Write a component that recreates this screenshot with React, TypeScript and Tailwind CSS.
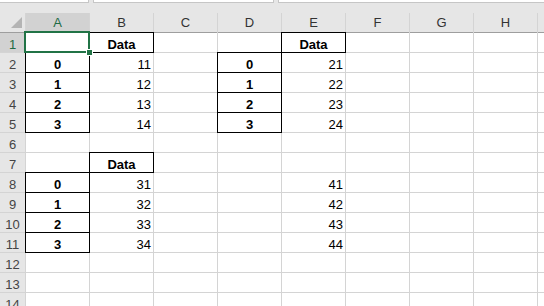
import clsx from 'clsx';

type Cell = { v: string; bold?: boolean; center?: boolean; box?: boolean };

const COLS = ['A', 'B', 'C', 'D', 'E', 'F', 'G', 'H'];
const ROWS = Array.from({ length: 14 }, (_, i) => i + 1);

// sheet contents, keyed by cell address
const cells: Record<string, Cell> = {
  B1: { v: 'Data', bold: true, center: true, box: true },
  E1: { v: 'Data', bold: true, center: true, box: true },
  B7: { v: 'Data', bold: true, center: true, box: true },
};
[0, 1, 2, 3].forEach((n) => {
  cells[`A${n + 2}`] = { v: String(n), bold: true, center: true, box: true };
  cells[`B${n + 2}`] = { v: String(11 + n) };
  cells[`D${n + 2}`] = { v: String(n), bold: true, center: true, box: true };
  cells[`E${n + 2}`] = { v: String(21 + n) };
  cells[`A${n + 8}`] = { v: String(n), bold: true, center: true, box: true };
  cells[`B${n + 8}`] = { v: String(31 + n) };
  cells[`E${n + 8}`] = { v: String(41 + n) };
});

function SheetCell({ addr }: { addr: string }) {
  const c = cells[addr];
  const selected = addr === 'A1';
  return (
    <div
      className={clsx(
        'relative flex items-end bg-white pr-[2px] pl-[2px] leading-[15px] text-black',
        c?.center ? 'justify-center' : 'justify-end',
        c?.bold && 'font-bold',
        c?.box && 'shadow-[0_0_0_1px_#000]',
        selected && 'z-10',
      )}
    >
      {c?.v}
      {selected && (
        <>
          <div className="absolute -left-[2px] -top-[2px] -right-[1px] -bottom-[1px] border-2 border-[#217346]" />
          <div className="absolute -right-[4px] -bottom-[4px] h-[7px] w-[7px] border border-white bg-[#217346]" />
        </>
      )}
    </div>
  );
}

export default function App() {
  return (
    <div className="h-[306px] w-[544px] overflow-hidden bg-[#e6e6e6] text-[13px] font-['Liberation_Sans',Arial,sans-serif]">
      {/* bottom edge of the formula bar */}
      <div className="flex h-[13px] items-start gap-[4px]">
        <div className="h-[3px] w-[89px] border-r border-b border-[#c6c6c6] bg-white" />
        <div className="h-[3px] w-[181px] border-x border-b border-[#c6c6c6] bg-white" />
        <div className="h-[3px] flex-1 border-l border-b border-[#c6c6c6] bg-white" />
      </div>

      <div className="grid grid-cols-[25px_repeat(8,63px)_1fr] grid-rows-[19px_repeat(14,19px)] gap-px bg-[#d4d4d4]">
        {/* corner */}
        <div className="bg-[#e6e6e6] shadow-[0_1px_0_#9e9e9e]">
          <svg width="25" height="19" viewBox="0 0 25 19">
            <polygon points="22,4 22,15 11,15" fill="#b4b4b4" />
          </svg>
        </div>
        {COLS.map((col) => (
          <div
            key={col}
            className={clsx(
              'flex items-center justify-center leading-[15px] shadow-[0_1px_0_#9e9e9e]',
              col === 'A' ? 'bg-[#d2d2d2] text-[#1e6b45]' : 'bg-[#e6e6e6] text-[#333]',
            )}
          >
            {col}
          </div>
        ))}
        <div className="bg-[#e6e6e6] shadow-[0_1px_0_#9e9e9e]" />

        {ROWS.map((r) => (
          <div key={r} className="contents">
            <div
              className={clsx(
                'flex items-end justify-center leading-[15px]',
                r === 1 ? 'bg-[#d2d2d2] text-[#1e6b45]' : 'bg-[#e6e6e6] text-[#444]',
              )}
            >
              {r}
            </div>
            {COLS.map((col) => (
              <SheetCell key={col} addr={`${col}${r}`} />
            ))}
            <div className="bg-white" />
          </div>
        ))}
      </div>
    </div>
  );
}
